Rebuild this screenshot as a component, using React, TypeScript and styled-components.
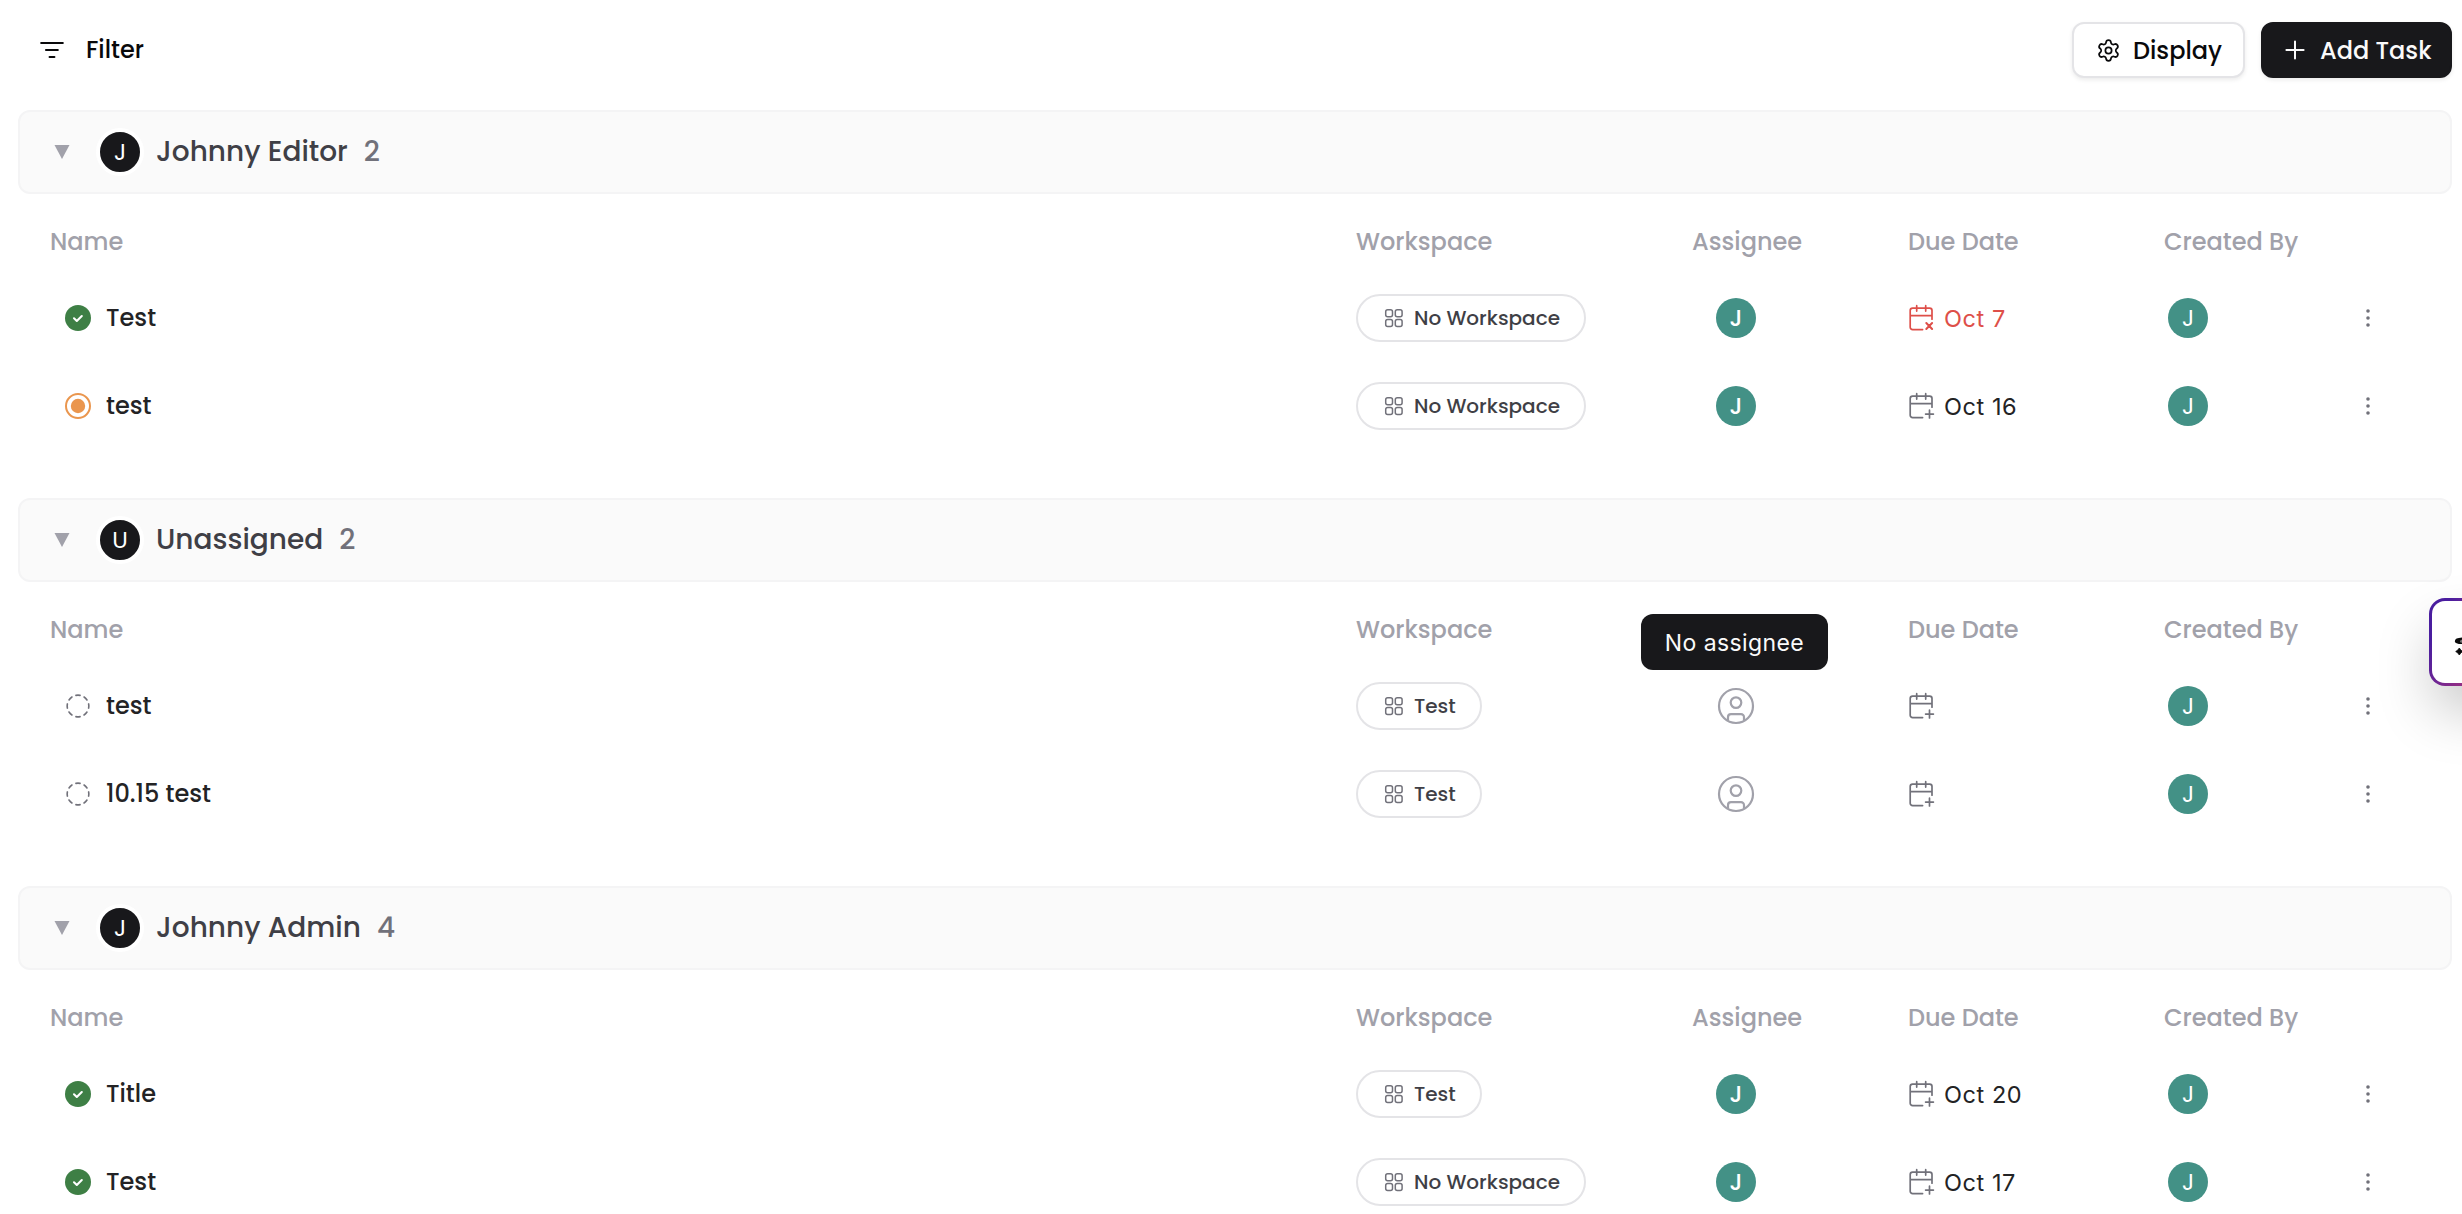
import React from "react";
import styled, { createGlobalStyle } from "styled-components";
import { Settings, CircleDashed } from "lucide-react";

const GlobalStyle = createGlobalStyle`
  *, *::before, *::after { box-sizing: border-box; }
  html, body { margin: 0; background: #fff; }
  body {
    height: 1214px;
    overflow: hidden;
    color: #232325;
    font-family: Poppins, Inter, "Liberation Sans", sans-serif;
    font-feature-settings: "cv11" 1;
    -webkit-font-smoothing: antialiased;
  }
  button { font: inherit; font-feature-settings: inherit; cursor: pointer; }
`;

const Page = styled.main`
  position: relative;
  width: 2462px;
  height: 1214px;
  padding: 0 10px 0 18px;
  overflow: hidden;
`;

const Toolbar = styled.header`
  display: flex;
  align-items: center;
  gap: 16px;
  height: 110px;
  padding-bottom: 10px;
`;

const FilterButton = styled.button`
  display: flex;
  align-items: center;
  gap: 19px;
  margin-right: auto;
  padding: 0 0 0 21px;
  border: 0;
  background: none;
  color: #09090b;
  font-size: 24px;
  font-weight: 480;
  line-height: 36px;
`;

const ActionButton = styled.button<{ $primary?: boolean; $width: number }>`
  display: flex;
  align-items: center;
  gap: ${(p) => (p.$primary ? 15 : 12)}px;
  width: ${(p) => p.$width}px;
  height: 56px;
  padding: 0 0 0 22px;
  border: 2px solid ${(p) => (p.$primary ? "#18181b" : "#e4e4e7")};
  border-radius: 12px;
  background: ${(p) => (p.$primary ? "#18181b" : "#fff")};
  color: ${(p) => (p.$primary ? "#fafafa" : "#09090b")};
  box-shadow: 0 2px 4px rgba(0, 0, 0, 0.08);
  font-size: 24px;
  font-weight: 480;
  white-space: nowrap;
`;

const Label = styled.span<{ $track?: number }>`
  letter-spacing: ${(p) => p.$track ?? 0}px;
  white-space: nowrap;
`;

const Group = styled.section`
  height: 388px;
`;

const GroupHeader = styled.div`
  display: flex;
  align-items: center;
  height: 84px;
  padding-left: 34px;
  border: 2px solid #f4f4f5;
  border-radius: 12px;
  background: #fafafa;
`;

const GroupAvatar = styled.span`
  display: flex;
  align-items: center;
  justify-content: center;
  width: 48px;
  height: 48px;
  margin: 0 12px 0 26px;
  border: 4px solid #fff;
  border-radius: 50%;
  background: #18181b;
  color: #fff;
  font-size: 23px;
`;

const GroupName = styled.h2`
  margin: 0;
  color: #3f3f46;
  font-size: 28px;
  font-weight: 480;
  line-height: 40px;
`;

const GroupCount = styled.span`
  margin-left: 16px;
  color: #71717a;
  font-size: 28px;
  font-weight: 480;
  line-height: 40px;
`;

const columns = `
  display: grid;
  grid-template-columns: 1306px 336px 216px 256px 176px 1fr;
  align-items: center;
  padding-left: 32px;
`;

const TableHead = styled.div`
  ${columns}
  height: 64px;
  margin-top: 16px;
  padding-bottom: 1px;
  color: #a1a1aa;
  font-size: 24px;
  font-weight: 480;
`;

const Row = styled.div`
  ${columns}
  height: 88px;
`;

const NameCell = styled.div`
  display: flex;
  align-items: center;
  gap: 15px;
  padding-left: 15px;
  font-size: 24px;
  font-weight: 480;

  span { padding-bottom: 1px; }
`;

const Pill = styled.span<{ $width: number }>`
  display: flex;
  align-items: center;
  gap: 10px;
  width: ${(p) => p.$width}px;
  height: 48px;
  padding-left: 26px;
  border: 2px solid #e4e4e7;
  border-radius: 24px;
  color: #3f3f46;
  font-size: 20px;
  font-weight: 480;

  span { padding-bottom: 1px; }
`;

const AssigneeCell = styled.div`
  position: relative;
  display: flex;
  justify-content: center;
  width: 88px;
`;

const Avatar = styled.span<{ $strong?: boolean }>`
  display: flex;
  align-items: center;
  justify-content: center;
  width: 40px;
  height: 40px;
  border-radius: 50%;
  background: #439186;
  color: #fff;
  font-size: 23px;
  font-weight: ${(p) => (p.$strong ? 520 : 400)};
`;

const Tooltip = styled.div`
  position: absolute;
  bottom: calc(100% + 16px);
  left: 50%;
  display: flex;
  align-items: center;
  justify-content: center;
  width: 187px;
  height: 56px;
  padding-top: 2px;
  border-radius: 12px;
  background: #18181b;
  color: #fafafa;
  font-family: Inter, "Liberation Sans", sans-serif;
  font-size: 23px;
  font-feature-settings: normal;
  transform: translateX(-50.8%);
`;

const DueCell = styled.div<{ $overdue?: boolean }>`
  display: flex;
  align-items: center;
  gap: 9px;
  padding-left: 14px;
  margin-left: -15px;
  color: ${(p) => (p.$overdue ? "#de4f49" : "#232325")};
  font-family: Inter, "Liberation Sans", sans-serif;
  font-size: 23.5px;
  font-feature-settings: normal;

  svg { color: ${(p) => (p.$overdue ? "#de4f49" : "#71717a")}; }
  span { padding-top: 1px; }
`;

const CreatorCell = styled.div`
  padding-left: 4px;
`;

const MenuCell = styled.div`
  display: flex;
  justify-content: center;
  width: 56px;
`;

const AssistantButton = styled.button`
  position: absolute;
  top: 598px;
  left: 2429px;
  display: flex;
  align-items: center;
  width: 110px;
  height: 88px;
  padding: 0 0 0 22px;
  border: 3px solid transparent;
  border-radius: 16px;
  background:
    linear-gradient(#fff, #fff) padding-box,
    linear-gradient(115deg, #4a1d9f 14%, #8f2d86 46%, #e0457b 100%) border-box;
  box-shadow: 0 28px 56px -4px rgba(0, 0, 0, 0.22);
`;

const FilterIcon = () => (
  <svg width="28" height="24" viewBox="0 0 28 24" fill="none" stroke="currentColor" strokeWidth="2.1" strokeLinecap="round">
    <path d="M2.2 5h21.6M7 12h11.8M10.6 19h4.8" />
  </svg>
);

const PlusIcon = () => (
  <svg width="20" height="20" viewBox="0 0 20 20" fill="none" stroke="currentColor" strokeWidth="2" strokeLinecap="round">
    <path d="M10 1.4v17.2M1.4 10h17.2" />
  </svg>
);

const CaretIcon = () => (
  <svg width="16" height="16" viewBox="0 0 16 16" fill="#a1a1aa">
    <path d="M0.5 1H15.5L8 15Z" />
  </svg>
);

const DoneIcon = () => (
  <svg width="26" height="26" viewBox="0 0 26 26" fill="none">
    <circle cx="13" cy="13" r="13" fill="#3e7f45" />
    <path d="M9 13.3l2.8 2.6 5-4.9" stroke="#fff" strokeWidth="2.1" strokeLinecap="round" strokeLinejoin="round" />
  </svg>
);

const ActiveIcon = () => (
  <svg width="26" height="26" viewBox="0 0 26 26" fill="none">
    <circle cx="13" cy="13" r="12" stroke="#ea964e" strokeWidth="2" />
    <circle cx="13" cy="13" r="7.2" fill="#ea964e" />
  </svg>
);

const GridIcon = () => (
  <svg width="20" height="20" viewBox="0 0 20 20" fill="none" stroke="#71717a" strokeWidth="1.5">
    <rect x="1.7" y="1.7" width="6.8" height="7" rx="2" />
    <rect x="11.3" y="1.7" width="6.8" height="7" rx="2" />
    <rect x="1.7" y="11.6" width="6.8" height="7" rx="2" />
    <rect x="11.3" y="11.6" width="6.8" height="7" rx="2" />
  </svg>
);

const NoUserIcon = () => (
  <svg width="40" height="40" viewBox="0 0 40 40" fill="none" stroke="#a1a1aa" strokeWidth="2.2">
    <circle cx="20" cy="20" r="17" />
    <circle cx="20" cy="16.6" r="5.3" />
    <path d="M12 34.6V31.2a3 3 0 0 1 3-3h10a3 3 0 0 1 3 3v3.4" />
  </svg>
);

const CalendarIcon = ({ overdue }: { overdue?: boolean }) => (
  <svg width="28" height="28" viewBox="0 0 28 28" fill="none" stroke="currentColor" strokeWidth="1.7" strokeLinecap="round" strokeLinejoin="round">
    <path d="M25 15.2V6.6a2.4 2.4 0 0 0-2.4-2.4H5.6a2.4 2.4 0 0 0-2.4 2.4v16.6a2.4 2.4 0 0 0 2.4 2.4h10M3.2 11.6H25M9.7 1.7v5.4M18.7 1.7v5.4" />
    {overdue ? <path d="M19.3 19l5.8 6M25.1 19l-5.8 6" strokeWidth="2" /> : <path d="M22.5 18.2v7.8M18.6 22.1h7.8" />}
  </svg>
);

const DotsIcon = () => (
  <svg width="8" height="24" viewBox="0 0 8 24" fill="#71717a">
    <circle cx="4" cy="5" r="1.8" />
    <circle cx="4" cy="12" r="1.8" />
    <circle cx="4" cy="19" r="1.8" />
  </svg>
);

const AssistantIcon = () => (
  <svg width="40" height="40" viewBox="0 0 40 40" fill="#0a0a0a">
    <path d="M20 4L24 15L36 19.5L24 24L20 36L15 24L8 22Q0.8 22 0.8 19.2Q0.8 16 8 15.6L15 15Z" />
    <circle cx="7.6" cy="19.2" r="1.5" fill="#777" />
    <path d="M5.3 26l1.5 2.1 2.1 1.4-2.1 1.4-1.5 2.1-1.5-2.1-2.1-1.4 2.1-1.4Z" stroke="#0a0a0a" strokeWidth="0.8" />
  </svg>
);

type Status = "done" | "active" | "open";
interface Task {
  name: string;
  status: Status;
  workspace: "No Workspace" | "Test";
  assigned: boolean;
  tooltip?: string;
  due?: string;
  overdue?: boolean;
}
interface TaskGroup {
  name: string;
  count: number;
  tasks: Task[];
}

const groups: TaskGroup[] = [
  {
    name: "Johnny Editor",
    count: 2,
    tasks: [
      { name: "Test", status: "done", workspace: "No Workspace", assigned: true, due: "Oct 7", overdue: true },
      { name: "test", status: "active", workspace: "No Workspace", assigned: true, due: "Oct 16" },
    ],
  },
  {
    name: "Unassigned",
    count: 2,
    tasks: [
      { name: "test", status: "open", workspace: "Test", assigned: false, tooltip: "No assignee" },
      { name: "10.15 test", status: "open", workspace: "Test", assigned: false },
    ],
  },
  {
    name: "Johnny Admin",
    count: 4,
    tasks: [
      { name: "Title", status: "done", workspace: "Test", assigned: true, due: "Oct 20" },
      { name: "Test", status: "done", workspace: "No Workspace", assigned: true, due: "Oct 17" },
    ],
  },
];

const StatusIcon = ({ status }: { status: Status }) => {
  if (status === "done") return <DoneIcon />;
  if (status === "active") return <ActiveIcon />;
  return <CircleDashed size={26} strokeWidth={1.5} color="#71717a" />;
};

const TaskRow = ({ task }: { task: Task }) => (
  <Row>
    <NameCell>
      <StatusIcon status={task.status} />
      <Label>{task.name}</Label>
    </NameCell>
    <Pill $width={task.workspace === "Test" ? 126 : 230}>
      <GridIcon />
      <Label>{task.workspace}</Label>
    </Pill>
    <AssigneeCell>
      {task.assigned ? <Avatar $strong>J</Avatar> : <NoUserIcon />}
      {task.tooltip && (
        <Tooltip>
          <Label $track={0.4}>{task.tooltip}</Label>
        </Tooltip>
      )}
    </AssigneeCell>
    <DueCell $overdue={task.overdue}>
      <CalendarIcon overdue={task.overdue} />
      {task.due && <Label $track={0.55}>{task.due}</Label>}
    </DueCell>
    <CreatorCell>
      <Avatar>J</Avatar>
    </CreatorCell>
    <MenuCell>
      <DotsIcon />
    </MenuCell>
  </Row>
);

export default function App() {
  return (
    <>
      <GlobalStyle />
      <Page>
        <Toolbar>
          <FilterButton>
            <FilterIcon />
            <Label>Filter</Label>
          </FilterButton>
          <ActionButton $width={173}>
            <Settings size={25} strokeWidth={1.65} />
            <Label>Display</Label>
          </ActionButton>
          <ActionButton $primary $width={191}>
            <PlusIcon />
            <Label>Add Task</Label>
          </ActionButton>
        </Toolbar>
        {groups.map((group) => {
          // An open tooltip on the first row covers the assignee heading.
          const headingCovered = Boolean(group.tasks[0].tooltip);
          return (
            <Group key={group.name}>
              <GroupHeader>
                <CaretIcon />
                <GroupAvatar>{group.name[0]}</GroupAvatar>
                <GroupName>{group.name}</GroupName>
                <GroupCount>{group.count}</GroupCount>
              </GroupHeader>
              <TableHead>
                <Label>Name</Label>
                <Label>Workspace</Label>
                <Label>{headingCovered ? "" : "Assignee"}</Label>
                <Label>Due Date</Label>
                <Label>Created By</Label>
              </TableHead>
              {group.tasks.map((task, i) => (
                <TaskRow key={i} task={task} />
              ))}
            </Group>
          );
        })}
        <AssistantButton>
          <AssistantIcon />
        </AssistantButton>
      </Page>
    </>
  );
}
